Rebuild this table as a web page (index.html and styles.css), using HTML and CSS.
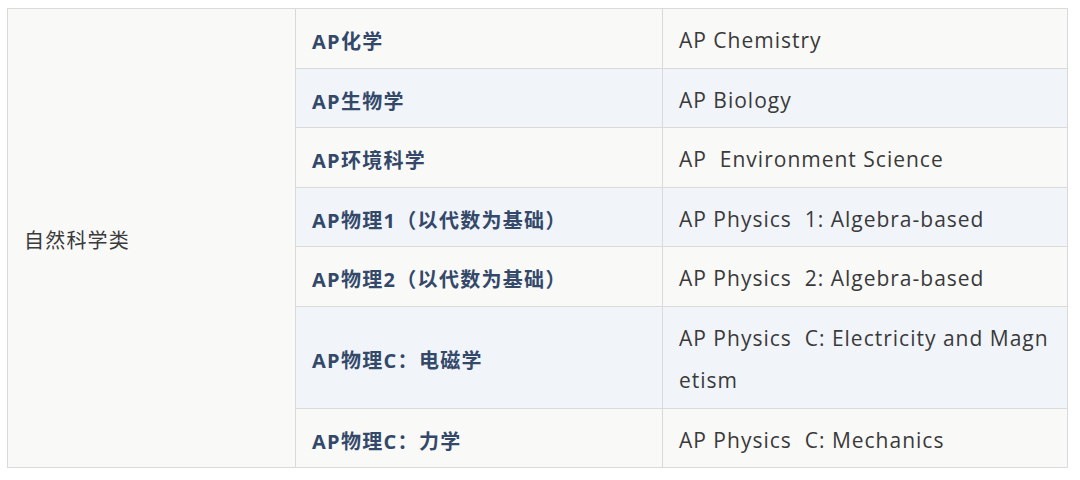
FILE: index.html
```html
<!DOCTYPE html>
<html lang="zh-CN">
<head>
<meta charset="utf-8">
<link rel="stylesheet" href="styles.css">
</head>
<body>
<table class="course-table">
  <colgroup>
    <col class="c1"><col class="c2"><col class="c3">
  </colgroup>
  <tbody>
    <tr class="row">
      <td class="cat" rowspan="7">自然科学类</td>
      <td class="zh">AP化学</td>
      <td class="en">AP Chemistry</td>
    </tr>
    <tr class="row alt">
      <td class="zh">AP生物学</td>
      <td class="en">AP Biology</td>
    </tr>
    <tr class="row">
      <td class="zh">AP环境科学</td>
      <td class="en">AP&nbsp; Environment Science</td>
    </tr>
    <tr class="row alt">
      <td class="zh">AP物理1（以代数为基础）</td>
      <td class="en">AP Physics&nbsp; 1: Algebra-based</td>
    </tr>
    <tr class="row">
      <td class="zh">AP物理2（以代数为基础）</td>
      <td class="en">AP Physics&nbsp; 2: Algebra-based</td>
    </tr>
    <tr class="row alt">
      <td class="zh">AP物理C：电磁学</td>
      <td class="en">AP Physics&nbsp; C: Electricity and Magn<br>etism</td>
    </tr>
    <tr class="row">
      <td class="zh">AP物理C：力学</td>
      <td class="en">AP Physics&nbsp; C: Mechanics</td>
    </tr>
  </tbody>
</table>
</body>
</html>
```

FILE: styles.css
```css
html, body {
  background: #ffffff;
}
body {
  margin: 8px 0 0 7px;
}
.course-table {
  border-collapse: collapse;
  table-layout: fixed;
  width: 1060px;
  font-family: "Open Sans", "Noto Sans CJK SC", sans-serif;
  color: #333333;
}
.c1 { width: 288px; }
.c2 { width: 367px; }
.c3 { width: 405px; }
.course-table td {
  border: 1px solid #dadada;
  background: #f9f9f8;
  padding: 10px 16px 6px;
  line-height: 42.5px;
  vertical-align: middle;
}
.row.alt td {
  background: #f1f5fa;
}
.row.alt td.cat {
  background: #f9f9f8;
}
.cat {
  font-family: "Noto Sans CJK SC", sans-serif;
  font-size: 20px;
  letter-spacing: 1.2px;
  color: #3a3a3a;
}
.course-table td.zh {
  padding-top: 12px;
  padding-bottom: 4px;
  font-family: "Open Sans", "Noto Sans CJK SC", sans-serif;
  font-weight: bold;
  font-size: 20px;
  letter-spacing: 1.3px;
  color: #34496a;
}
.en {
  font-size: 21px;
  letter-spacing: 1px;
  color: #3a3a3a;
  white-space: nowrap;
}
```
